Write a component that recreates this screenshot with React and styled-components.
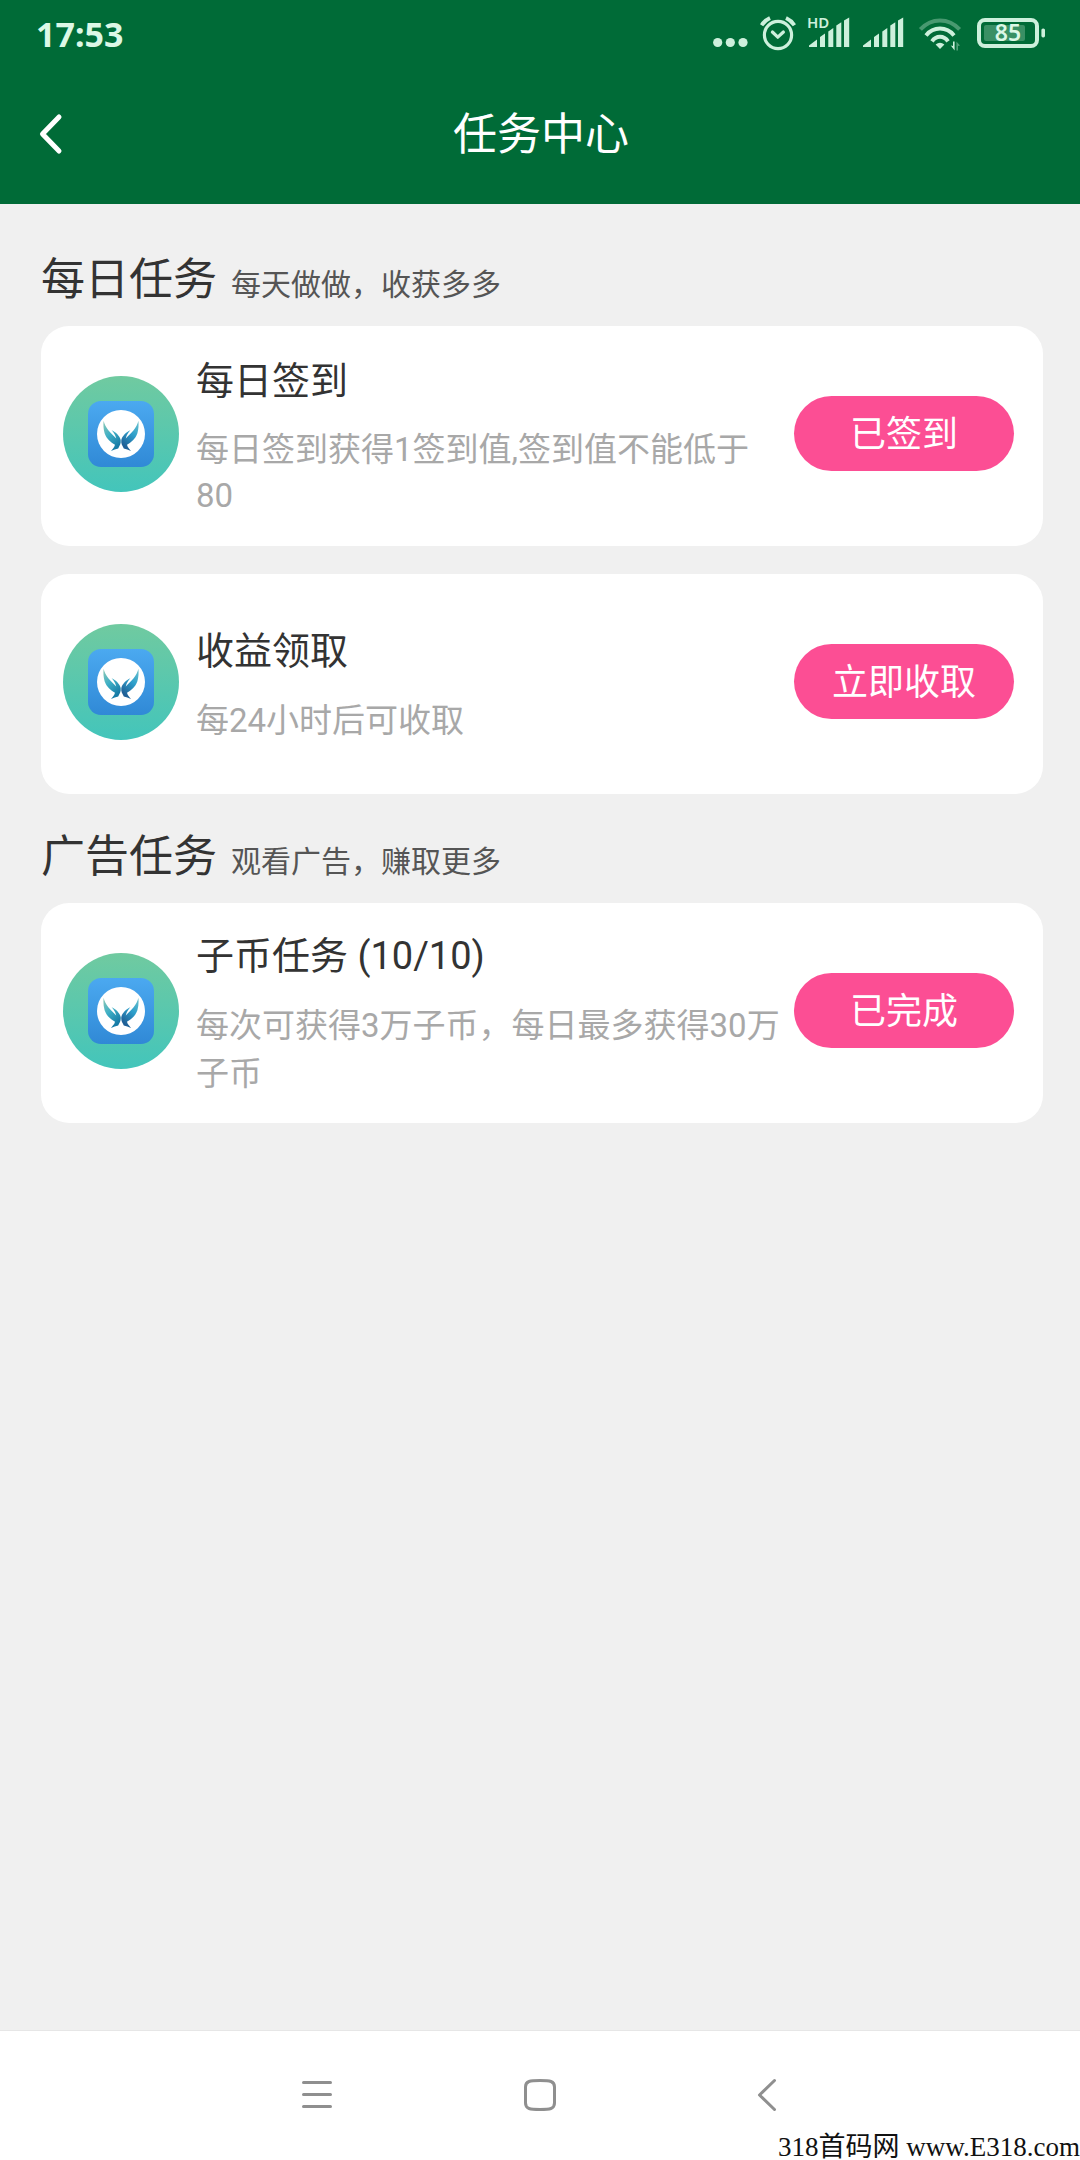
import React from "react";
import styled, { createGlobalStyle } from "styled-components";

const GlobalStyle = createGlobalStyle`
  *, *::before, *::after { box-sizing: border-box; }
  body {
    margin: 0;
    background: #f0f0f0;
    color: #333;
    font-family: Roboto, "Noto Sans CJK SC", sans-serif;
  }
  h1, h2, h3, p, ul { margin: 0; padding: 0; font-weight: 400; }
  button { border: 0; padding: 0; background: none; font: inherit; color: inherit; cursor: pointer; }
  svg { display: block; flex: none; }
`;

const Screen = styled.div`
  position: relative;
  display: flex;
  flex-direction: column;
  min-height: 100vh;
`;

const Top = styled.header`
  background: #006b37;
  color: #fff;
`;

const StatusBar = styled.div`
  display: flex;
  align-items: center;
  justify-content: space-between;
  height: 68px;
  padding: 0 35px 0 36px;
  color: #cdf0dc;
`;

const Clock = styled.time`
  font: 700 34px/44px "Noto Sans", sans-serif;
  color: #dcf8e6;
`;

const StatusIcons = styled.div`
  display: flex;
  align-items: center;
  gap: 12px;
`;

const TitleBar = styled.div`
  display: grid;
  grid-template-columns: 100px 1fr 98px;
  align-items: center;
  height: 136px;
  padding-bottom: 5px;
`;

const BackButton = styled.button`
  display: flex;
  align-items: center;
  height: 80px;
  padding-left: 35px;
`;

const PageTitle = styled.h1`
  padding-top: 2px;
  font-size: 44px;
  line-height: 64px;
  text-align: center;
`;

const Main = styled.main`
  flex: 1;
  padding: 13px 37px 40px 41px;
`;

const SectionHead = styled.div`
  display: flex;
  align-items: baseline;
  gap: 14px;
  padding: 31px 0 14px;
`;

const SectionTitle = styled.h2`
  font-size: 44px;
  line-height: 64px;
`;

const SectionNote = styled.p`
  font-size: 30px;
  line-height: 40px;
  color: #555;
`;

const TaskList = styled.ul`
  display: flex;
  flex-direction: column;
  gap: 28px;
  list-style: none;
`;

const Card = styled.li`
  display: flex;
  align-items: center;
  min-height: 220px;
  padding: 0 29px 5px 22px;
  border-radius: 28px;
  background: #fff;
`;

const TaskText = styled.div`
  flex: 1;
  min-width: 0;
  margin: 0 14px 0 17px;
  padding-top: 4px;
`;

const TaskTitle = styled.h3`
  margin-bottom: 18px;
  font-size: 38px;
  line-height: 56px;
`;

const TaskNote = styled.p`
  font-size: 33px;
  line-height: ${(p) => (p.$tight ? 46 : 48)}px;
  color: #a8a8a8;
`;

const ActionButton = styled.button`
  flex: none;
  width: 220px;
  height: 75px;
  padding-bottom: 6px;
  border-radius: 38px;
  background: #fc4e94;
  color: #fff;
  font-size: 36px;
`;

const NavBar = styled.nav`
  display: flex;
  align-items: center;
  justify-content: center;
  gap: 127px;
  height: 130px;
  padding-bottom: 2px;
  border-top: 1px solid #e6e6e6;
  background: #fff;
`;

const NavButton = styled.button`
  display: flex;
  align-items: center;
  justify-content: center;
  width: 100px;
  height: 80px;
`;

const Watermark = styled.p`
  position: absolute;
  right: 0;
  bottom: 0;
  font-family: "Liberation Serif", "Noto Sans CJK SC", serif;
  font-size: 27px;
  line-height: 26px;
  color: #111;
`;

const MoreDots = () => (
  <svg width="36" height="36" fill="currentColor" aria-hidden="true">
    <circle cx="5.7" cy="26.5" r="4.6" />
    <circle cx="18.3" cy="26.5" r="4.6" />
    <circle cx="31" cy="26.5" r="4.6" />
  </svg>
);

const AlarmIcon = () => (
  <svg width="36" height="36" fill="none" stroke="currentColor" strokeWidth="3.2" aria-hidden="true">
    <circle cx="18" cy="19" r="13.6" />
    <path d="M1.6 9.2Q4.8 4.4 10 2M34.4 9.2Q31.2 4.4 26 2" strokeWidth="3.8" />
    <path d="M12.4 16L17.8 21.2L23.4 16" strokeLinecap="round" strokeLinejoin="round" />
  </svg>
);

const SignalIcon = ({ hd }) => (
  <svg width="42" height="36" overflow="visible" fill="currentColor" aria-hidden="true">
    <path d="M1 31V29.5L9 23.4V31ZM12 31V21L17 17.6V31ZM20.3 31V15.4L25.3 12V31ZM28.3 31V9.6L33.3 6.2V31ZM36 31V4.6L41.2 1.6V31Z" />
    {hd && (
      <text x="-1" y="12" fontSize="15" fontWeight="600" fontFamily="Noto Sans, sans-serif">HD</text>
    )}
  </svg>
);

const WifiIcon = () => (
  <svg width="46" height="36" fill="none" stroke="currentColor" strokeWidth="4" aria-hidden="true">
    <path d="M4.4 13.4Q12.6 4.4 24 4.4T43.6 13.4" opacity="0.35" />
    <path d="M10 19.4Q15.6 12.6 24 12.6T38 19.4" />
    <path d="M16 25.4Q19 20.8 24 20.8T32 25.4" />
    <path d="M24 33L19.6 28.6Q24 25 28.4 28.6Z" fill="currentColor" stroke="none" />
    <path d="M34.8 29.6L37 30V25.6H38.6V34.6Z" fill="currentColor" stroke="none" />
    <path d="M40.4 25.6V34.6H42V30L44 29.6Z" fill="currentColor" stroke="none" opacity="0.4" />
  </svg>
);

const BatteryIcon = ({ level }) => (
  <svg width="71" height="36" fill="currentColor" aria-label={`${level}%`}>
    <rect x="5" y="4" width="58" height="26" rx="6" fill="none" stroke="currentColor" strokeWidth="4" />
    <rect x="10" y="9" width="41" height="16" rx="2" opacity="0.28" />
    <rect x="67.4" y="12.4" width="3.6" height="9" rx="1.6" />
    <text x="34" y="25.4" fontSize="23" fontWeight="600" textAnchor="middle" fontFamily="Noto Sans, sans-serif" fill="#dcf8e6">
      {level}
    </text>
  </svg>
);

const BackIcon = () => (
  <svg width="30" height="44" fill="none" stroke="currentColor" strokeWidth="5" strokeLinecap="round" strokeLinejoin="round" aria-hidden="true">
    <path d="M24 5L7.500 22L24 39" />
  </svg>
);

const HAND = "M40.600 44.800C42.200 52 47.500 56.800 53.200 62.400C52.400 59 50.800 56.600 48.600 54.200C52.800 56 56.800 60 57.700 64C58.100 67.500 56.800 69.500 55.200 72.400C53 72.800 50.500 73.600 48 75C50.400 72 52.200 70.400 51.800 68.600C48 66.400 43.600 63 41.600 57.200C40.400 53.200 40.200 49 40.600 44.800Z";

const TaskLogo = ({ id }) => (
  <svg width="116" height="116" viewBox="0 0 116 116" aria-hidden="true">
    <defs>
      <linearGradient id={`${id}-disc`} x1="0" y1="0" x2="0" y2="1">
        <stop offset="0" stopColor="#70caa0" />
        <stop offset="1" stopColor="#43c5bb" />
      </linearGradient>
      <linearGradient id={`${id}-tile`} x1="0" y1="0" x2="0" y2="1">
        <stop offset="0" stopColor="#4ba9f0" />
        <stop offset="1" stopColor="#3089d6" />
      </linearGradient>
      <linearGradient id={`${id}-left`} x1="0" y1="0" x2="0.5" y2="1">
        <stop offset="0" stopColor="#8fc9b4" />
        <stop offset="0.5" stopColor="#3fb0c6" />
        <stop offset="1" stopColor="#167ba6" />
      </linearGradient>
      <linearGradient id={`${id}-right`} x1="0" y1="0" x2="0.5" y2="1">
        <stop offset="0" stopColor="#6cc3cc" />
        <stop offset="0.5" stopColor="#2d9fcb" />
        <stop offset="1" stopColor="#1f5f96" />
      </linearGradient>
    </defs>
    <circle cx="58" cy="58" r="58" fill={`url(#${id}-disc)`} />
    <rect x="25" y="25" width="66" height="66" rx="13" fill={`url(#${id}-tile)`} />
    <circle cx="58" cy="58" r="24" fill="#fff" />
    <path d={HAND} fill={`url(#${id}-left)`} />
    <path d={HAND} fill={`url(#${id}-right)`} transform="matrix(-1 0 0 1 116 0)" />
  </svg>
);

const SECTIONS = [
  {
    title: "每日任务",
    note: "每天做做，收获多多",
    tasks: [
      { id: "sign", title: "每日签到", note: "每日签到获得1签到值,签到值不能低于80", action: "已签到", tight: true },
      { id: "income", title: "收益领取", note: "每24小时后可收取", action: "立即收取" },
    ],
  },
  {
    title: "广告任务",
    note: "观看广告，赚取更多",
    tasks: [
      { id: "coin", title: "子币任务 (10/10)", note: "每次可获得3万子币，每日最多获得30万子币", action: "已完成" },
    ],
  },
];

export default function App() {
  return (
    <Screen lang="zh-CN">
      <GlobalStyle />
      <Top>
        <StatusBar>
          <Clock>17:53</Clock>
          <StatusIcons>
            <MoreDots />
            <AlarmIcon />
            <SignalIcon hd />
            <SignalIcon />
            <WifiIcon />
            <BatteryIcon level={85} />
          </StatusIcons>
        </StatusBar>
        <TitleBar>
          <BackButton aria-label="返回">
            <BackIcon />
          </BackButton>
          <PageTitle>任务中心</PageTitle>
        </TitleBar>
      </Top>
      <Main>
        {SECTIONS.map((section) => (
          <section key={section.title}>
            <SectionHead>
              <SectionTitle>{section.title}</SectionTitle>
              <SectionNote>{section.note}</SectionNote>
            </SectionHead>
            <TaskList>
              {section.tasks.map((task) => (
                <Card key={task.id}>
                  <TaskLogo id={task.id} />
                  <TaskText>
                    <TaskTitle>{task.title}</TaskTitle>
                    <TaskNote $tight={task.tight}>{task.note}</TaskNote>
                  </TaskText>
                  <ActionButton>{task.action}</ActionButton>
                </Card>
              ))}
            </TaskList>
          </section>
        ))}
      </Main>
      <NavBar>
        <NavButton aria-label="菜单">
          <svg width="40" height="32" stroke="#8f8f8f" strokeWidth="3" strokeLinecap="round" aria-hidden="true">
            <path d="M10.500 3.500H37.500M10.500 15.500H37.500M10.500 27.500H37.500" />
          </svg>
        </NavButton>
        <NavButton aria-label="主页">
          <svg width="32" height="32" fill="none" stroke="#8f8f8f" strokeWidth="3" aria-hidden="true">
            <path d="M16 1.500C26 1.500 30.500 2 30.500 8V24C30.500 30 26 30.500 16 30.500S1.500 30 1.500 24V8C1.500 2 6 1.500 16 1.500Z" />
          </svg>
        </NavButton>
        <NavButton aria-label="返回">
          <svg width="20" height="34" fill="none" stroke="#8f8f8f" strokeWidth="3" strokeLinecap="round" strokeLinejoin="round" aria-hidden="true">
            <path d="M17.500 2.500L2.500 17L17.500 31.500" />
          </svg>
        </NavButton>
      </NavBar>
      <Watermark>318首码网 www.E318.com</Watermark>
    </Screen>
  );
}
